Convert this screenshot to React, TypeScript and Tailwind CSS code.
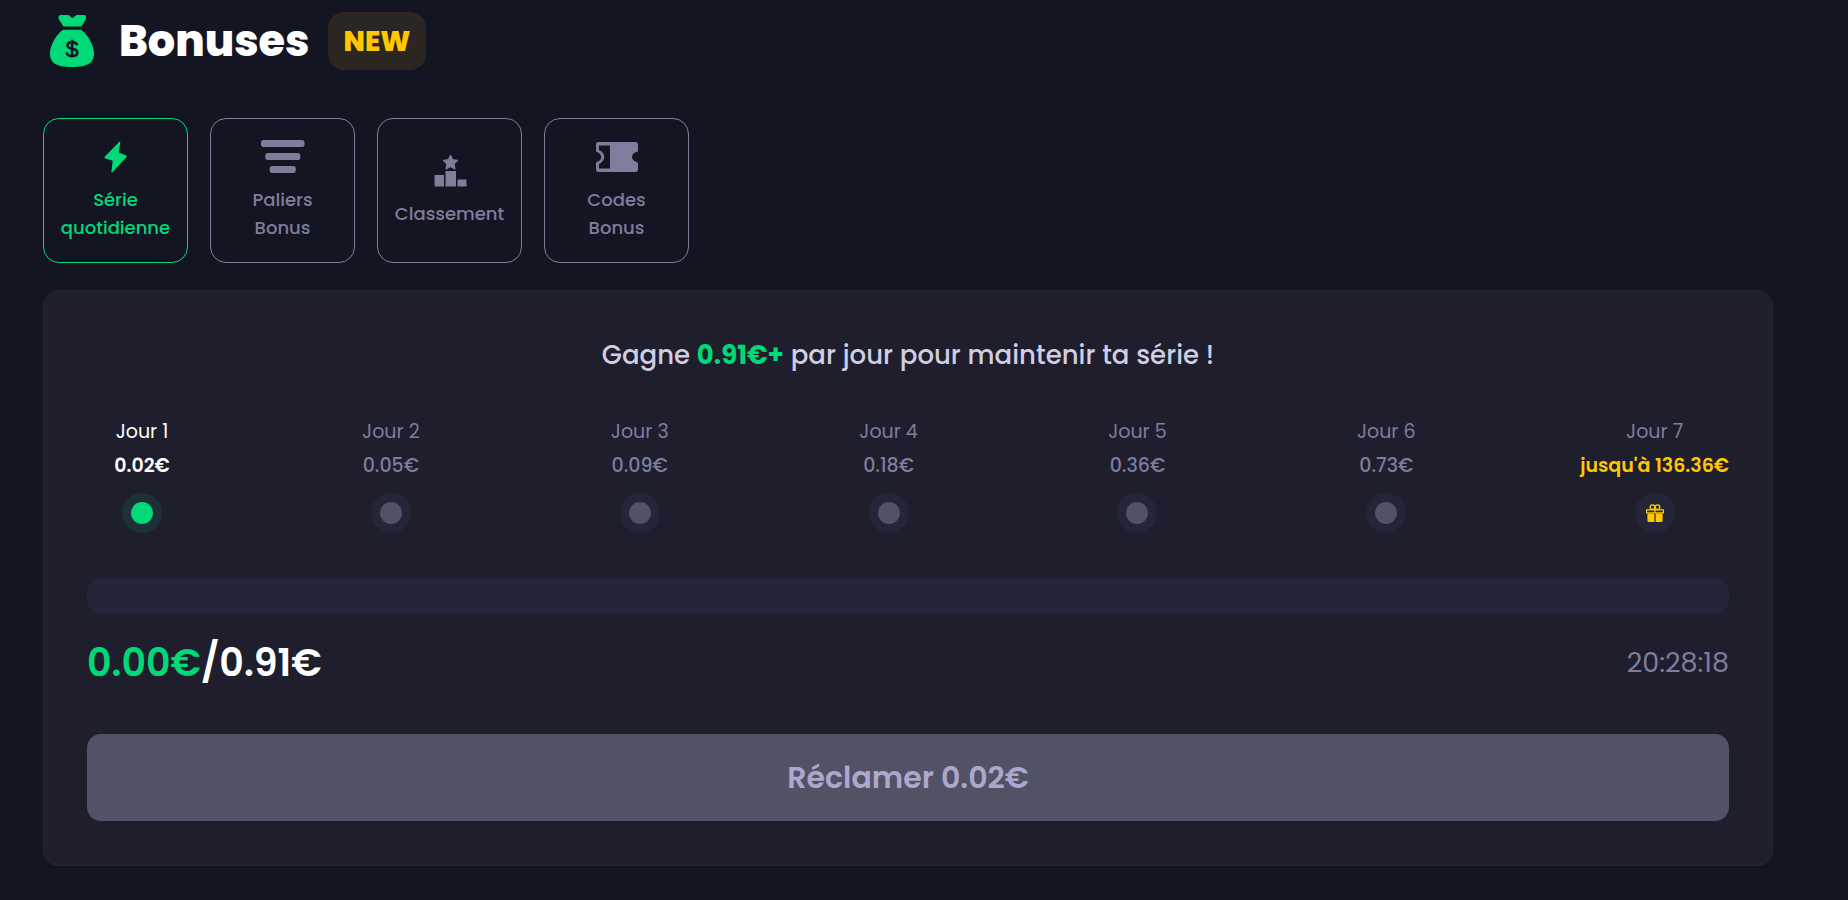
import React, { useState } from 'react';
import clsx from 'clsx';

type TabId = 'streak' | 'tiers' | 'ranking' | 'codes';

interface Tab {
  id: TabId;
  label: string;
  icon: React.ReactNode;
}

interface Day {
  label: string;
  amount: string;
}

const MoneyBagIcon = () => (
  <svg viewBox="0 0 44 52" className="w-11 h-[52px] shrink-0" aria-hidden="true">
    <path
      d="M11 0h7c2 0 3 3 4.500 3S25 0 27 0h7c2 0 2.600 2 1.800 4L32.500 10c-.5 1-1 1.500-2 1.500h-16c-1 0-1.500-.5-2-1.500L8.700 4C7.900 2 9 0 11 0Z"
      fill="#00d977"
    />
    <path
      d="M14.500 14.700h15c1.500 0 2.500.6 3.500 1.600C39 22 44 31 44 38.500 44 47.500 38 52 22 52S0 47.500 0 38.500C0 31 5 22 11 16.300c1-1 2-1.600 3.500-1.600Z"
      fill="#00d977"
    />
    <path
      d="M27 30.200c-.5-2-2.200-3.100-4.900-3.100-2.900 0-4.700 1.300-4.700 3.400 0 4.800 9.900 1.800 9.900 7 0 2.200-2 3.600-5.100 3.600-3.200 0-5-1.300-5.500-3.600M22.100 24.700v17.800"
      fill="none"
      stroke="#131523"
      strokeWidth="2.600"
    />
  </svg>
);

const BoltIcon = () => (
  <svg viewBox="0 0 24 32" className="w-6 h-8" fill="currentColor" aria-hidden="true">
    <path d="M15.300.8c.3-.4 1-.2 1 .4l-1.500 10.300 7.400 3.100c.6.300.8.900.4 1.400L8.500 31.200c-.4.500-1.200.3-1.100-.4l1.300-11L1 17.200c-.6-.2-.7-.9-.3-1.400L15.300.8Z" />
  </svg>
);

const TiersIcon = () => (
  <svg viewBox="0 0 44 34" className="w-11 h-[34px]" fill="currentColor" aria-hidden="true">
    <rect x="0" y="0" width="43.500" height="7" rx="2.500" />
    <rect x="4.300" y="13" width="35" height="7" rx="2.500" />
    <rect x="8.700" y="26" width="26" height="7" rx="2.500" />
  </svg>
);

const PodiumIcon = () => (
  <svg viewBox="0 0 34 34" className="w-[34px] h-[34px]" fill="currentColor" aria-hidden="true">
    <path
      d="m17.500 1 2.300 4.700 5.200.7-3.800 3.600.9 5.200-4.600-2.500-4.600 2.500.9-5.200L10 6.400l5.200-.7L17.500 1Z"
      stroke="currentColor"
      strokeLinejoin="round"
    />
    <rect x="1.500" y="21" width="9.500" height="11.500" />
    <rect x="12.500" y="17" width="10.500" height="15.500" />
    <rect x="24.500" y="25.500" width="9" height="7" />
  </svg>
);

const TicketIcon = () => (
  <svg viewBox="0 0 42 30" className="w-[42px] h-[30px]" fill="currentColor" aria-hidden="true">
    <path
      fillRule="evenodd"
      d="M2.500 0h37C41 0 42 1 42 2.500v6c0 1-.7 1.400-1.500 1.600-6 1.400-6 8.400 0 9.800.8.200 1.500.6 1.500 1.600v6c0 1.500-1 2.500-2.500 2.500h-37C1 30 0 29 0 27.500v-6c0-1 .5-1.400 1.300-1.700 5.300-2 5.300-7.600 0-9.600C.5 9.900 0 9.500 0 8.500v-6C0 1 1 0 2.500 0ZM3 3.500v4.600c7 3.100 7 10.700 0 13.800v4.600h11v-23H3Z"
    />
  </svg>
);

const GiftIcon = () => (
  <svg viewBox="0 0 18 18" className="w-[18px] h-[18px]" fill="none" stroke="#ffc700" aria-hidden="true">
    <circle cx="6.500" cy="3.200" r="2.300" strokeWidth="1.400" />
    <circle cx="11.500" cy="3.200" r="2.300" strokeWidth="1.400" />
    <path d="M.6 5.800h16.800v3.100H.6z" strokeWidth="1.200" />
    <path d="M9 4.500V9" strokeWidth="1.200" />
    <path
      d="M1.400 9.400h7V18H2.600c-.7 0-1.200-.5-1.200-1.200V9.400ZM9.600 9.400h7v7.400c0 .7-.5 1.200-1.200 1.200H9.600V9.400Z"
      fill="#ffc700"
      stroke="none"
    />
  </svg>
);

const TABS: Tab[] = [
  { id: 'streak', label: 'Série quotidienne', icon: <BoltIcon /> },
  { id: 'tiers', label: 'Paliers Bonus', icon: <TiersIcon /> },
  { id: 'ranking', label: 'Classement', icon: <PodiumIcon /> },
  { id: 'codes', label: 'Codes Bonus', icon: <TicketIcon /> },
];

const DAYS: Day[] = [
  { label: 'Jour 1', amount: '0.02€' },
  { label: 'Jour 2', amount: '0.05€' },
  { label: 'Jour 3', amount: '0.09€' },
  { label: 'Jour 4', amount: '0.18€' },
  { label: 'Jour 5', amount: '0.36€' },
  { label: 'Jour 6', amount: '0.73€' },
  { label: 'Jour 7', amount: "jusqu'à 136.36€" },
];

const DayItem: React.FC<{ day: Day; active: boolean; last: boolean }> = ({ day, active, last }) => (
  <li
    className={clsx(
      'flex min-w-[110px] flex-col items-center text-[19px] leading-[34px] whitespace-nowrap',
      active ? 'text-white' : 'text-[#7f7d9c]'
    )}
  >
    <span>{day.label}</span>
    <span className={clsx(active || last ? 'font-semibold' : 'font-medium', last && 'text-[#ffc700]')}>
      {day.amount}
    </span>
    <span
      className={clsx(
        'mt-[10px] flex h-10 w-10 items-center justify-center rounded-full',
        active ? 'bg-[#1c3136]' : 'bg-[#242538]'
      )}
    >
      {last ? (
        <GiftIcon />
      ) : (
        <span className={clsx('h-[22px] w-[22px] rounded-full', active ? 'bg-[#00d977]' : 'bg-[#525266]')} />
      )}
    </span>
  </li>
);

const App: React.FC = () => {
  const [tab, setTab] = useState<TabId>('streak');

  return (
    <main className="min-h-screen bg-[#131523] pt-3 pr-[75px] pb-8 pl-[43px] font-[Poppins,Inter,sans-serif]">
      {/* Header */}
      <header className="flex items-center pl-[7px]">
        <MoneyBagIcon />
        <h1 className="ml-[25px] text-[43px] leading-[58px] font-extrabold text-white">Bonuses</h1>
        <span className="ml-[18px] rounded-2xl bg-[#2c2622] px-4 pt-0.5 text-[28px] leading-14 font-extrabold text-[#ffc700]">
          NEW
        </span>
      </header>

      {/* Tabs */}
      <nav className="mt-12 flex flex-wrap gap-[22px]">
        {TABS.map((item) => (
          <button
            key={item.id}
            type="button"
            onClick={() => setTab(item.id)}
            className={clsx(
              'flex h-[145px] w-[145px] flex-col items-center justify-center gap-3 rounded-2xl border pt-px text-[18px] leading-7 font-medium',
              tab === item.id ? 'border-[#00d977] text-[#00d977]' : 'border-[#7f7d9c] text-[#7f7d9c]'
            )}
          >
            <span className="flex h-[34px] items-center">{item.icon}</span>
            <span className="px-[15px]">{item.label}</span>
          </button>
        ))}
      </nav>

      {/* Daily streak */}
      <section className="mt-[27px] rounded-2xl border border-[#242538] bg-[#1f1e2d] px-[43px] py-11">
        <h2 className="text-center text-[26px] leading-10 font-medium text-[#d0cee2]">
          Gagne <strong className="font-bold text-[#00d977]">0.91€+</strong> par jour pour maintenir ta série !
        </h2>

        <ul className="mt-10 flex justify-between">
          {DAYS.map((day, idx) => (
            <DayItem key={day.label} day={day} active={idx === 0} last={idx === DAYS.length - 1} />
          ))}
        </ul>

        <div
          className="mt-[45px] h-9 rounded-[14px] bg-[#242538]"
          role="progressbar"
          aria-valuenow={0}
          aria-valuemin={0}
          aria-valuemax={91}
        />

        <div className="mt-5 flex items-center justify-between">
          <p className="text-[38px] leading-[58px] font-semibold text-white">
            <span className="text-[#00d977]">0.00€</span>/0.91€
          </p>
          <time className="text-[27px] text-[#7f7d9c]">20:28:18</time>
        </div>

        <button
          type="button"
          disabled
          className="mt-[42px] h-[87px] w-full rounded-[14px] bg-[#525266] text-[30px] font-semibold text-[#aba8cc]"
        >
          Réclamer 0.02€
        </button>
      </section>
    </main>
  );
};

export default App;
